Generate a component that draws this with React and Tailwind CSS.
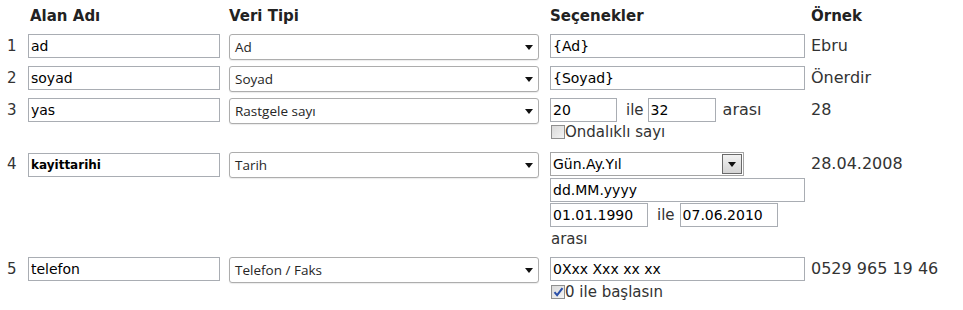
import React from "react";

// Test data field definition table (Alan Adı / Veri Tipi / Seçenekler / Örnek)

function TextBox({ value, className = "", small = false }) {
  return (
    <input
      readOnly
      defaultValue={value}
      className={
        "h-[24px] border border-[#a9adb3] bg-white px-[2px] text-black outline-none font-['DejaVu_Sans',Verdana,sans-serif] " +
        (small ? "text-[12px] font-bold text-[#3a3a3a] " : "text-[14px] ") +
        className
      }
    />
  );
}

function Arrow() {
  return (
    <svg width="8" height="5" viewBox="0 0 8 5" className="shrink-0">
      <path d="M0 0h8L4 5z" fill="#111" />
    </svg>
  );
}

function DropDown({ value }) {
  return (
    <div className="flex h-[26px] w-[310px] items-center justify-between rounded-[3px] border border-[#adadad] bg-white pl-[5px] pr-[5px] shadow-[0_1px_1px_rgba(0,0,0,0.08)]">
      <span className="font-['Open_Sans','Noto_Sans',sans-serif] text-[13.5px] text-[#262626]">{value}</span>
      <Arrow />
    </div>
  );
}

function CheckBox({ checked, label }) {
  return (
    <div className="flex items-center text-[15px] text-[#333]">
      <span className="ml-[1px] flex h-[14px] w-[14px] items-center justify-center border border-[#8f8f8f] bg-gradient-to-br from-[#d9d9d9] to-[#f4f4f4]">
        {checked && (
          <svg width="11" height="10" viewBox="0 0 11 10">
            <path d="M1.5 5.2l2.6 3L9.5 1.2" fill="none" stroke="#2a4fa8" strokeWidth="2" />
          </svg>
        )}
      </span>
      <span className="leading-[16px]">{label}</span>
    </div>
  );
}

function Num({ n }) {
  return (
    <div className="flex h-[24px] w-[28px] shrink-0 items-center pl-[7px] text-[15px] text-[#333]">{n}</div>
  );
}

function Example({ children }) {
  return <div className="flex h-[24px] items-center pl-[6px] text-[16px] text-[#333]">{children}</div>;
}

export default function App() {
  return (
    <div className="h-[310px] w-[963px] overflow-hidden bg-white font-['DejaVu_Sans',Verdana,sans-serif]">
      {/* header */}
      <div className="flex h-[34px] items-center pb-[2px] text-[15px] font-bold text-[#222]">
        <div className="w-[30px] shrink-0" />
        <div className="w-[199px] shrink-0">Alan Adı</div>
        <div className="w-[321px] shrink-0">Veri Tipi</div>
        <div className="w-[261px] shrink-0">Seçenekler</div>
        <div>Örnek</div>
      </div>

      {/* 1 */}
      <div className="flex h-[32px] items-start">
        <Num n="1" />
        <div className="w-[201px] shrink-0"><TextBox value="ad" className="w-[192px]" /></div>
        <div className="w-[321px] shrink-0"><DropDown value="Ad" /></div>
        <div className="w-[255px] shrink-0"><TextBox value="{Ad}" className="w-[255px]" /></div>
        <Example>Ebru</Example>
      </div>

      {/* 2 */}
      <div className="flex h-[32px] items-start">
        <Num n="2" />
        <div className="w-[201px] shrink-0"><TextBox value="soyad" className="w-[192px]" /></div>
        <div className="w-[321px] shrink-0"><DropDown value="Soyad" /></div>
        <div className="w-[255px] shrink-0"><TextBox value="{Soyad}" className="w-[255px]" /></div>
        <Example>Önerdir</Example>
      </div>

      {/* 3 */}
      <div className="flex h-[54px] items-start">
        <Num n="3" />
        <div className="w-[201px] shrink-0"><TextBox value="yas" className="w-[192px]" /></div>
        <div className="w-[321px] shrink-0"><DropDown value="Rastgele sayı" /></div>
        <div className="flex w-[255px] shrink-0 flex-col gap-[2px]">
          <div className="flex items-center text-[15px] text-[#333]">
            <TextBox value="20" className="w-[67px]" />
            <span className="pl-[9px] pr-[4px]">ile</span>
            <TextBox value="32" className="w-[68px]" />
            <span className="pl-[7px] text-[16px]">arası</span>
          </div>
          <CheckBox label="Ondalıklı sayı" />
        </div>
        <Example>28</Example>
      </div>

      {/* 4 */}
      <div className="flex h-[105px] items-start">
        <Num n="4" />
        <div className="w-[201px] shrink-0"><TextBox value="kayittarihi" small className="w-[192px]" /></div>
        <div className="w-[321px] shrink-0"><DropDown value="Tarih" /></div>
        <div className="flex w-[255px] shrink-0 flex-col">
          <div className="flex h-[24px] w-[194px] items-center justify-between border border-[#a5a5a5] bg-white pl-[2px] pr-[1px]">
            <span className="text-[14px] text-black">Gün.Ay.Yıl</span>
            <span className="flex h-[20px] w-[20px] items-center justify-center border border-[#6a6a6a] bg-gradient-to-b from-[#f2f2f2] to-[#d4d4d4]">
              <Arrow />
            </span>
          </div>
          <TextBox value="dd.MM.yyyy" className="mt-[2px] w-[255px]" />
          <div className="mt-[1px] flex items-center text-[15px] text-[#333]">
            <TextBox value="01.01.1990" className="w-[98px]" />
            <span className="pl-[9px] pr-[5px]">ile</span>
            <TextBox value="07.06.2010" className="w-[98px]" />
          </div>
          <div className="pl-[1px] pt-[2px] text-[15px] leading-[20px] text-[#333]">arası</div>
        </div>
        <Example>28.04.2008</Example>
      </div>

      {/* 5 */}
      <div className="flex items-start">
        <Num n="5" />
        <div className="w-[201px] shrink-0"><TextBox value="telefon" className="w-[192px]" /></div>
        <div className="w-[321px] shrink-0"><DropDown value="Telefon / Faks" /></div>
        <div className="flex w-[255px] shrink-0 flex-col gap-[3px]">
          <TextBox value="0Xxx Xxx xx xx" className="w-[255px]" />
          <CheckBox checked label="0 ile başlasın" />
        </div>
        <Example>0529 965 19 46</Example>
      </div>
    </div>
  );
}
